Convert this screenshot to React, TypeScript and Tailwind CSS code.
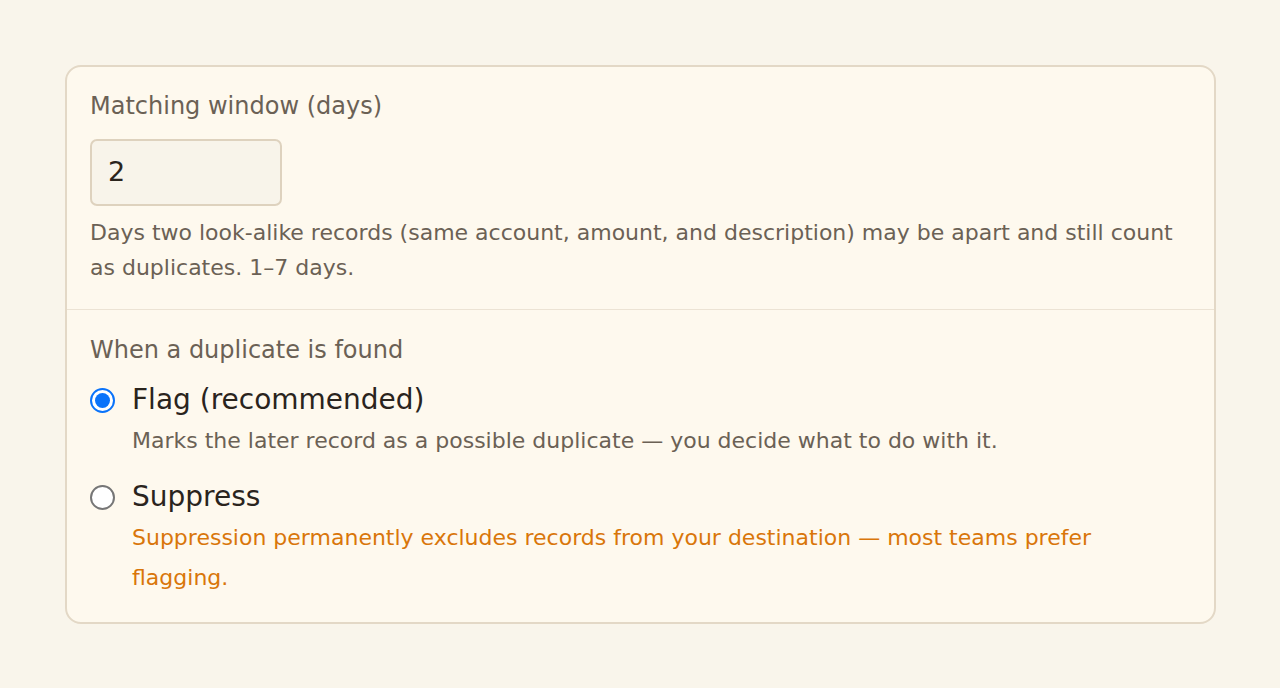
import React, { useState } from "react";

export default function App() {
  const [mode, setMode] = useState<"flag" | "suppress">("flag");
  return (
    <div
      className="min-h-[688px] w-full bg-[#f9f5eb] pt-[65px] pl-[65px] pr-[64px]"
      style={{ fontFamily: '"DejaVu Sans", Verdana, sans-serif' }}
    >
      <div className="w-[1151px] rounded-[16px] border-2 border-[#e3d8c6] bg-[#fef9ee]">
        <div className="px-[23px] pt-[21px] pb-[24px]">
          <div className="text-[24px] leading-[36px] text-[#6b6155]">Matching window (days)</div>
          <div className="mt-[15px] flex h-[67px] w-[192px] items-center rounded-[7px] border-2 border-[#ded2be] bg-[#f8f4ea] pl-[16px] text-[27px] text-[#2b241c]">
            2
          </div>
          <p className="mt-[9px] text-[22px] leading-[35px] text-[#6b6155]">
            Days two look-alike records (same account, amount, and description) may be apart and still count as duplicates. 1–7 days.
          </p>
        </div>
        <div className="border-t border-[#ece3d4] px-[23px] pt-[22px] pb-[24px]">
          <div className="text-[24px] leading-[36px] text-[#6b6155]">When a duplicate is found</div>
          <div className="mt-[11px] flex flex-col gap-[15px]">
            <div className="flex items-start gap-[17px]" onClick={() => setMode("flag")}>
              <div className="mt-[9px] flex h-[25px] w-[25px] shrink-0 items-center justify-center rounded-full">
                {mode === "flag" ? (
                  <div className="flex h-[25px] w-[25px] items-center justify-center rounded-full border-[2px] border-[#0a73fa] bg-white">
                    <div className="h-[15px] w-[15px] rounded-full bg-[#0a73fa]" />
                  </div>
                ) : (
                  <div className="h-[25px] w-[25px] rounded-full border-[2px] border-[#767676] bg-white" />
                )}
              </div>
              <div>
                <div className="text-[28px] leading-[42px] text-[#2a241d]">Flag (recommended)</div>
                <div className="text-[22px] leading-[40px] text-[#6b6155]">
                  Marks the later record as a possible duplicate — you decide what to do with it.
                </div>
              </div>
            </div>
            <div className="flex items-start gap-[17px]" onClick={() => setMode("suppress")}>
              <div className="mt-[9px] flex h-[25px] w-[25px] shrink-0 items-center justify-center rounded-full">
                {mode === "suppress" ? (
                  <div className="flex h-[25px] w-[25px] items-center justify-center rounded-full border-[2px] border-[#0a73fa] bg-white">
                    <div className="h-[15px] w-[15px] rounded-full bg-[#0a73fa]" />
                  </div>
                ) : (
                  <div className="h-[25px] w-[25px] rounded-full border-[2px] border-[#767676] bg-white" />
                )}
              </div>
              <div>
                <div className="text-[28px] leading-[42px] text-[#2a241d]">Suppress</div>
                <div className="w-[1000px] text-[22px] leading-[40px] text-[#d9760a]">
                  Suppression permanently excludes records from your destination — most teams prefer flagging.
                </div>
              </div>
            </div>
          </div>
        </div>
      </div>
    </div>
  );
}
